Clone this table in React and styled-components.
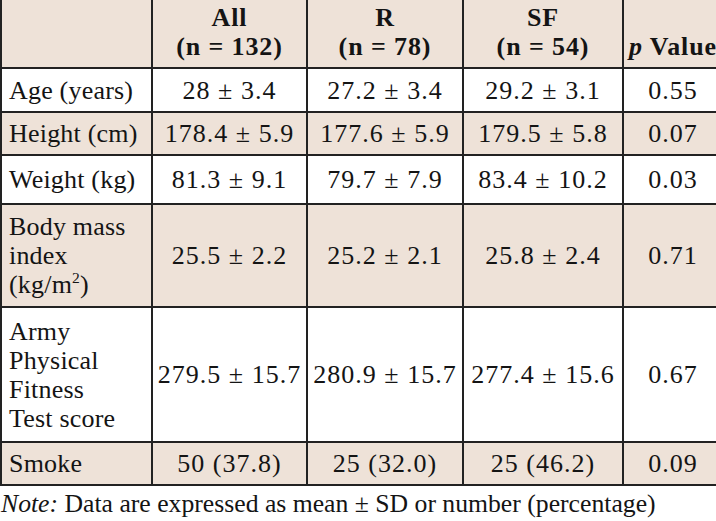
import styled, { createGlobalStyle } from "styled-components";

const GlobalStyle = createGlobalStyle`
  html, body {
    margin: 0;
    padding: 0;
    background: #fff;
    overflow: hidden;
  }
  body {
    font-family: "Liberation Serif", "Times New Roman", serif;
    color: #141414;
  }
`;

const Page = styled.div`
  width: 716px;
  height: 521px;
  overflow: hidden;
`;

const Table = styled.table`
  border-collapse: collapse;
  table-layout: fixed;
  width: 722px;
  font-size: 26px;
  line-height: 29px;
`;

const Row = styled.tr`
  height: ${(p) => p.$h}px;
  background: ${(p) => (p.$shade ? "#eee2d8" : "#fff")};
`;

const HeadCell = styled.th`
  border: 2px solid #222;
  border-top: none;
  padding: 0 0 6px;
  vertical-align: bottom;
  text-align: center;
  font-weight: bold;
  letter-spacing: 0.9px;
  white-space: nowrap;
`;

const Label = styled.td`
  border: 2px solid #222;
  padding: 6px 4px 6px 7px;
  text-align: left;
  vertical-align: middle;
  letter-spacing: 0.2px;
`;

const Cell = styled.td`
  border: 2px solid #222;
  padding: 6px 0;
  text-align: center;
  vertical-align: middle;
  letter-spacing: 1px;
  white-space: nowrap;
`;

const Note = styled.p`
  margin: 3px 0 0 1px;
  font-size: 25.7px;
  line-height: 30px;
  white-space: nowrap;
`;

const Sup = styled.sup`
  font-size: 0.6em;
  line-height: 0;
`;

const rows = [
  { label: ["Age (years)"], values: ["28 ± 3.4", "27.2 ± 3.4", "29.2 ± 3.1", "0.55"], h: 44 },
  { label: ["Height (cm)"], values: ["178.4 ± 5.9", "177.6 ± 5.9", "179.5 ± 5.8", "0.07"], h: 43, shade: true },
  { label: ["Weight (kg)"], values: ["81.3 ± 9.1", "79.7 ± 7.9", "83.4 ± 10.2", "0.03"], h: 49 },
  {
    label: ["Body mass", "index", <>(kg/m<Sup>2</Sup>)</>],
    values: ["25.5 ± 2.2", "25.2 ± 2.1", "25.8 ± 2.4", "0.71"],
    h: 103,
    shade: true,
  },
  {
    label: ["Army", "Physical", "Fitness", "Test score"],
    values: ["279.5 ± 15.7", "280.9 ± 15.7", "277.4 ± 15.6", "0.67"],
    h: 135,
  },
  { label: ["Smoke"], values: ["50 (37.8)", "25 (32.0)", "25 (46.2)", "0.09"], h: 43, shade: true },
];

export default function App() {
  return (
    <Page>
      <GlobalStyle />
      <Table>
        <colgroup>
          <col style={{ width: 151 }} />
          <col style={{ width: 155 }} />
          <col style={{ width: 156 }} />
          <col style={{ width: 160 }} />
          <col style={{ width: 100 }} />
        </colgroup>
        <thead>
          <Row $h={68} $shade>
            <HeadCell />
            <HeadCell>All<br />(n = 132)</HeadCell>
            <HeadCell>R<br />(n = 78)</HeadCell>
            <HeadCell>SF<br />(n = 54)</HeadCell>
            <HeadCell><i>p</i> Value</HeadCell>
          </Row>
        </thead>
        <tbody>
          {rows.map((r, i) => (
            <Row key={i} $h={r.h} $shade={r.shade}>
              <Label>
                {r.label.map((line, j) => (
                  <span key={j}>
                    {j > 0 && <br />}
                    {line}
                  </span>
                ))}
              </Label>
              {r.values.map((v, j) => (
                <Cell key={j}>{v}</Cell>
              ))}
            </Row>
          ))}
        </tbody>
      </Table>
      <Note>
        <i>Note:</i> Data are expressed as mean ± SD or number (percentage)
      </Note>
    </Page>
  );
}
